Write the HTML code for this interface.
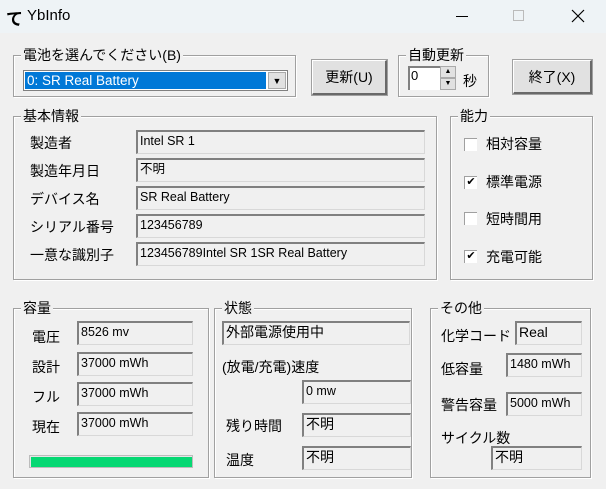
<!DOCTYPE html>
<html><head><meta charset="utf-8"><style>
*{margin:0;padding:0;box-sizing:border-box}
body{width:606px;height:489px;background:#f0f0f0;font-family:"Liberation Sans","Noto Sans CJK JP",sans-serif;font-size:14px;color:#000;position:relative;overflow:hidden}
.a{position:absolute;white-space:nowrap}
.tb{left:0;top:0;width:606px;height:33px;background:#eef3f6}
.gb{position:absolute;border:1px solid #a0a0a0;box-shadow:1px 1px 0 #fff inset,1px 1px 0 #fff}
.gl{position:absolute;top:-11px;left:7px;background:#f0f0f0;padding:0 2px;font-size:14px;line-height:20px}
.ed{position:absolute;border-top:2px solid #808080;border-left:2px solid #808080;border-right:1px solid #d8d8d8;border-bottom:1px solid #d8d8d8;background:#f0f0f0;font-size:12.5px;line-height:19px;padding-left:2px;white-space:nowrap;overflow:hidden}
.btn{position:absolute;background:#e1e1e1;border:1px solid #fff;border-right:2px solid #696969;border-bottom:2px solid #696969;outline:1px solid #a0a0a0;display:flex;align-items:center;justify-content:center;font-size:14px}
.cb{position:absolute;width:13px;height:13px;background:#fff;border-top:1px solid #a0a0a0;border-left:1px solid #a0a0a0;font-size:11px;line-height:11px;text-align:center}
</style></head><body>
<div class="a tb"></div>
<div class="a" style="left:6px;top:5px;font-size:17px;font-weight:bold">て</div>
<div class="a" style="left:27px;top:7px;font-size:15px">YbInfo</div>
<div class="a" style="left:456px;top:16px;width:12px;height:1px;background:#000"></div>
<div class="a" style="left:513px;top:10px;width:11px;height:11px;border:1px solid #bbb"></div>
<svg class="a" style="left:571px;top:9px" width="14" height="14"><path d="M1 1L13 13M13 1L1 13" stroke="#000" stroke-width="1.2"/></svg>

<div class="gb" style="left:13px;top:55px;width:283px;height:42px"><span class="gl">電池を選んでください(B)</span></div>
<div class="a" style="left:23px;top:70px;width:265px;height:21px;background:#fff;border:1px solid #808080"></div>
<div class="a" style="left:25px;top:72px;width:241px;height:17px;background:#0078d7;color:#fff;font-size:13.5px;line-height:17px;padding-left:2px">0: SR Real Battery</div>
<div class="a" style="left:268px;top:72px;width:18px;height:17px;background:#e1e1e1;border:1px solid #aaa;font-size:9px;text-align:center;line-height:16px">▼</div>
<div class="btn" style="left:312px;top:60px;width:75px;height:35px">更新(U)</div>
<div class="gb" style="left:398px;top:55px;width:91px;height:42px"><span class="gl">自動更新</span></div>
<div class="a" style="left:408px;top:66px;width:32px;height:24px;background:#fff;border-top:2px solid #808080;border-left:2px solid #808080;font-size:13px;padding-left:1px">0</div>
<div class="a" style="left:440px;top:66px;width:16px;height:12px;background:#e1e1e1;border:1px solid #aaa;font-size:7px;text-align:center;line-height:9px">▲</div>
<div class="a" style="left:440px;top:78px;width:16px;height:12px;background:#e1e1e1;border:1px solid #aaa;font-size:7px;text-align:center;line-height:9px">▼</div>
<div class="a" style="left:463px;top:71px">秒</div>
<div class="btn" style="left:513px;top:60px;width:79px;height:34px">終了(X)</div>

<div class="gb" style="left:13px;top:116px;width:424px;height:164px"><span class="gl">基本情報</span></div>
<div class="a" style="left:30px;top:133px">製造者</div>
<div class="a" style="left:30px;top:161px">製造年月日</div>
<div class="a" style="left:30px;top:189px">デバイス名</div>
<div class="a" style="left:30px;top:217px">シリアル番号</div>
<div class="a" style="left:30px;top:245px">一意な識別子</div>
<div class="ed" style="left:136px;top:130px;width:289px;height:24px">Intel SR 1</div>
<div class="ed" style="left:136px;top:158px;width:289px;height:24px">不明</div>
<div class="ed" style="left:136px;top:186px;width:289px;height:24px">SR Real Battery</div>
<div class="ed" style="left:136px;top:214px;width:289px;height:24px">123456789</div>
<div class="ed" style="left:136px;top:242px;width:289px;height:24px">123456789Intel SR 1SR Real Battery</div>

<div class="gb" style="left:450px;top:116px;width:143px;height:164px"><span class="gl">能力</span></div>
<div class="cb" style="left:464px;top:138px"></div><div class="a" style="left:486px;top:134px">相対容量</div>
<div class="cb" style="left:464px;top:176px">✔</div><div class="a" style="left:486px;top:172px">標準電源</div>
<div class="cb" style="left:464px;top:212px"></div><div class="a" style="left:486px;top:209px">短時間用</div>
<div class="cb" style="left:464px;top:250px">✔</div><div class="a" style="left:486px;top:247px">充電可能</div>

<div class="gb" style="left:13px;top:308px;width:196px;height:170px"><span class="gl">容量</span></div>
<div class="a" style="left:32px;top:327px">電圧</div>
<div class="a" style="left:32px;top:357px">設計</div>
<div class="a" style="left:32px;top:387px">フル</div>
<div class="a" style="left:32px;top:417px">現在</div>
<div class="ed" style="left:77px;top:321px;width:116px;height:24px">8526 mv</div>
<div class="ed" style="left:77px;top:352px;width:116px;height:24px">37000 mWh</div>
<div class="ed" style="left:77px;top:382px;width:116px;height:24px">37000 mWh</div>
<div class="ed" style="left:77px;top:412px;width:116px;height:24px">37000 mWh</div>
<div class="a" style="left:29px;top:455px;width:164px;height:13px;border:1px solid #bcbcbc;background:#e6e6e6"></div>
<div class="a" style="left:31px;top:457px;width:161px;height:10px;background:#06d873"></div>

<div class="gb" style="left:214px;top:308px;width:198px;height:170px"><span class="gl">状態</span></div>
<div class="ed" style="left:222px;top:321px;width:188px;height:24px;font-size:14px">外部電源使用中</div>
<div class="a" style="left:222px;top:357px">(放電/充電)速度</div>
<div class="ed" style="left:302px;top:380px;width:109px;height:24px">0 mw</div>
<div class="a" style="left:226px;top:416px">残り時間</div>
<div class="ed" style="left:302px;top:413px;width:109px;height:24px;font-size:14px">不明</div>
<div class="a" style="left:226px;top:450px">温度</div>
<div class="ed" style="left:302px;top:446px;width:109px;height:24px;font-size:14px">不明</div>

<div class="gb" style="left:430px;top:308px;width:161px;height:170px"><span class="gl">その他</span></div>
<div class="a" style="left:441px;top:326px">化学コード</div>
<div class="ed" style="left:515px;top:321px;width:67px;height:24px;font-size:14px">Real</div>
<div class="a" style="left:441px;top:359px">低容量</div>
<div class="ed" style="left:506px;top:353px;width:76px;height:24px">1480 mWh</div>
<div class="a" style="left:441px;top:395px">警告容量</div>
<div class="ed" style="left:506px;top:392px;width:76px;height:24px">5000 mWh</div>
<div class="a" style="left:441px;top:428px">サイクル数</div>
<div class="ed" style="left:491px;top:446px;width:91px;height:24px;font-size:14px">不明</div>
</body></html>
